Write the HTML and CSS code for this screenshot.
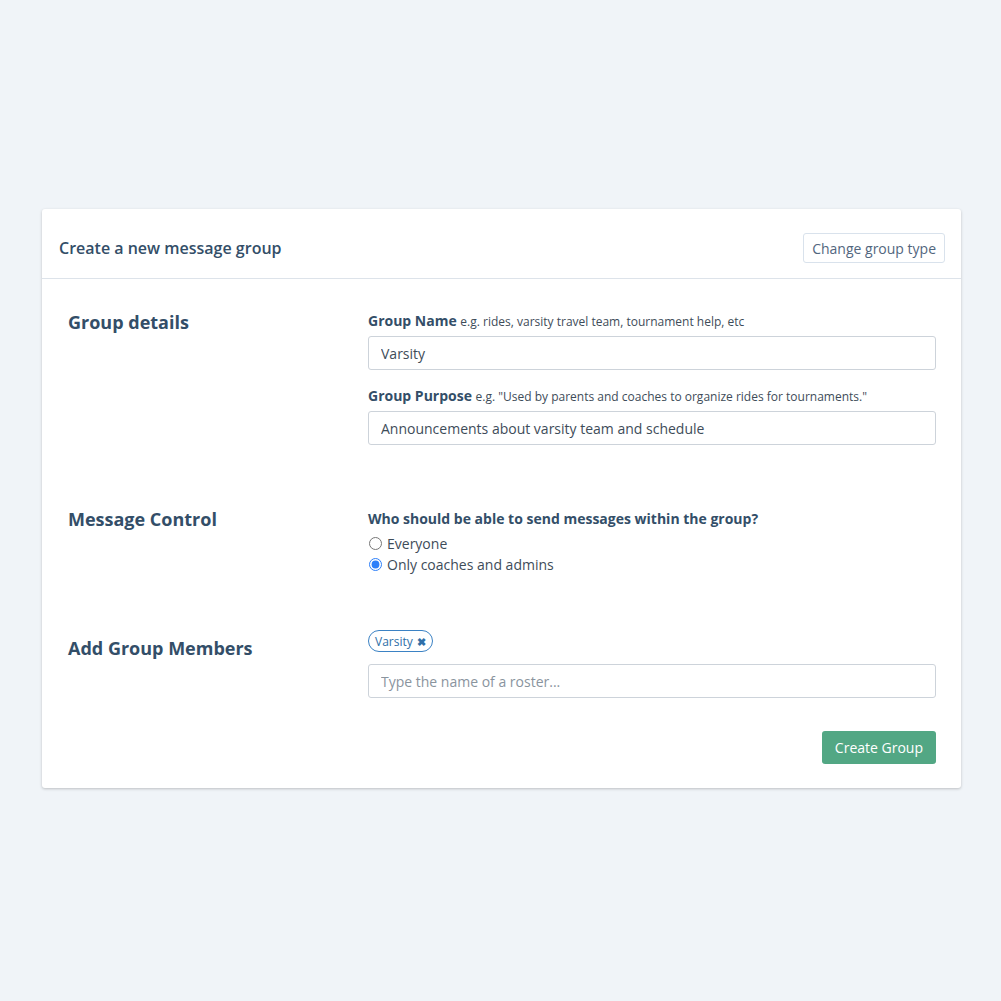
FILE: index.html
```html
<!DOCTYPE html>
<html lang="en">
<head>
    <meta charset="UTF-8">
    <title>Create a new message group</title>
    <link rel="stylesheet" href="styles.css">
</head>
<body>
    <div class="card">
        <div class="card-header">
            <div class="card-title">Create a new message group</div>
            <button class="btn-outline">Change group type</button>
        </div>

        <div class="card-body">
            <div class="section">
                <div class="section-title">Group details</div>
                <div class="section-fields">
                    <label class="field-label">Group Name <span class="hint">e.g. rides, varsity travel team, tournament help, etc</span></label>
                    <input type="text" class="text-input" value="Varsity">

                    <label class="field-label">Group Purpose <span class="hint">e.g. "Used by parents and coaches to organize rides for tournaments."</span></label>
                    <input type="text" class="text-input" value="Announcements about varsity team and schedule">
                </div>
            </div>

            <div class="section section-control">
                <div class="section-title">Message Control</div>
                <div class="section-fields">
                    <div class="question">Who should be able to send messages within the group?</div>
                    <label class="radio-row"><input type="radio" name="who"> Everyone</label>
                    <label class="radio-row"><input type="radio" name="who" checked> Only coaches and admins</label>
                </div>
            </div>

            <div class="section section-members">
                <div class="section-title members-title">Add Group Members</div>
                <div class="section-fields">
                    <div class="tags">
                        <span class="tag">Varsity <span class="tag-x">✖</span></span>
                    </div>
                    <input type="text" class="text-input" placeholder="Type the name of a roster...">
                </div>
            </div>

            <div class="actions">
                <button class="btn-primary">Create Group</button>
            </div>
        </div>
    </div>
</body>
</html>
```

FILE: styles.css
```css
body {
    margin: 0;
    padding: 209px 0 0 42px;
    background-color: #f0f4f8;
    font-family: 'Open Sans', sans-serif;
    color: #334e68;
    height: 1001px;
    box-sizing: border-box;
}

.card {
    width: 919px;
    background-color: #fff;
    border-radius: 3px;
    box-shadow: 0 1px 3px rgba(0, 0, 0, 0.22);
}

.card-header {
    border-bottom: 1px solid #dde3ea;
    display: flex;
    align-items: center;
    justify-content: space-between;
    padding: 24px 16px 15px 17px;
}

.card-title {
    font-size: 16px;
    font-weight: 600;
    color: #334e68;
}

.btn-outline {
    background: #fff;
    border: 1px solid #d9e2ec;
    border-radius: 3px;
    height: 30px;
    padding: 0 8px;
    font-family: 'Open Sans', sans-serif;
    font-size: 14px;
    color: #52667e;
    cursor: pointer;
}

.card-body {
    padding: 33px 25px 24px 26px;
}

.section {
    display: grid;
    grid-template-columns: 300px 1fr;
}

.section-title {
    font-size: 18px;
    font-weight: 700;
    line-height: 20px;
    color: #334e68;
}

.section-fields {
    display: flex;
    flex-direction: column;
}

.field-label {
    font-size: 14px;
    font-weight: 700;
    line-height: 18px;
    margin-bottom: 5px;
    color: #334e68;
}

.hint {
    font-size: 12px;
    font-weight: 400;
    color: #3e4c59;
}

.text-input {
    height: 34px;
    box-sizing: border-box;
    border: 1px solid #cdd3da;
    border-radius: 3px;
    padding: 0 12px;
    font-family: 'Open Sans', sans-serif;
    font-size: 14px;
    color: #3e4c59;
    margin-bottom: 17px;
}

.text-input::placeholder {
    color: #8a949e;
}

.section-fields .text-input:last-child {
    margin-bottom: 0;
}

.section-control {
    margin-top: 64px;
}

.question {
    font-size: 14px;
    font-weight: 700;
    line-height: 20px;
    margin-bottom: 4px;
}

.radio-row {
    display: flex;
    align-items: center;
    font-size: 14px;
    line-height: 21px;
    color: #3e4c59;
}

.radio-row input {
    margin: 0 5px 0 1px;
    width: 13px;
    height: 13px;
    accent-color: #2d7ff9;
}

.section-members {
    margin-top: 55px;
}

.members-title {
    margin-top: 8px;
}

.tags {
    display: flex;
    margin-bottom: 12px;
}

.tag {
    display: inline-flex;
    align-items: center;
    height: 22px;
    box-sizing: border-box;
    padding: 0 6px;
    border: 1px solid #3b82c4;
    border-radius: 11px;
    font-size: 12px;
    color: #2f6fa8;
}

.tag-x {
    font-size: 11px;
    margin-left: 4px;
    font-weight: 700;
}

.actions {
    display: flex;
    justify-content: flex-end;
    margin-top: 33px;
}

.btn-primary {
    background-color: #52a784;
    color: #fff;
    border: none;
    border-radius: 3px;
    height: 33px;
    padding: 0 13px;
    font-family: 'Open Sans', sans-serif;
    font-size: 14px;
    cursor: pointer;
}
```
